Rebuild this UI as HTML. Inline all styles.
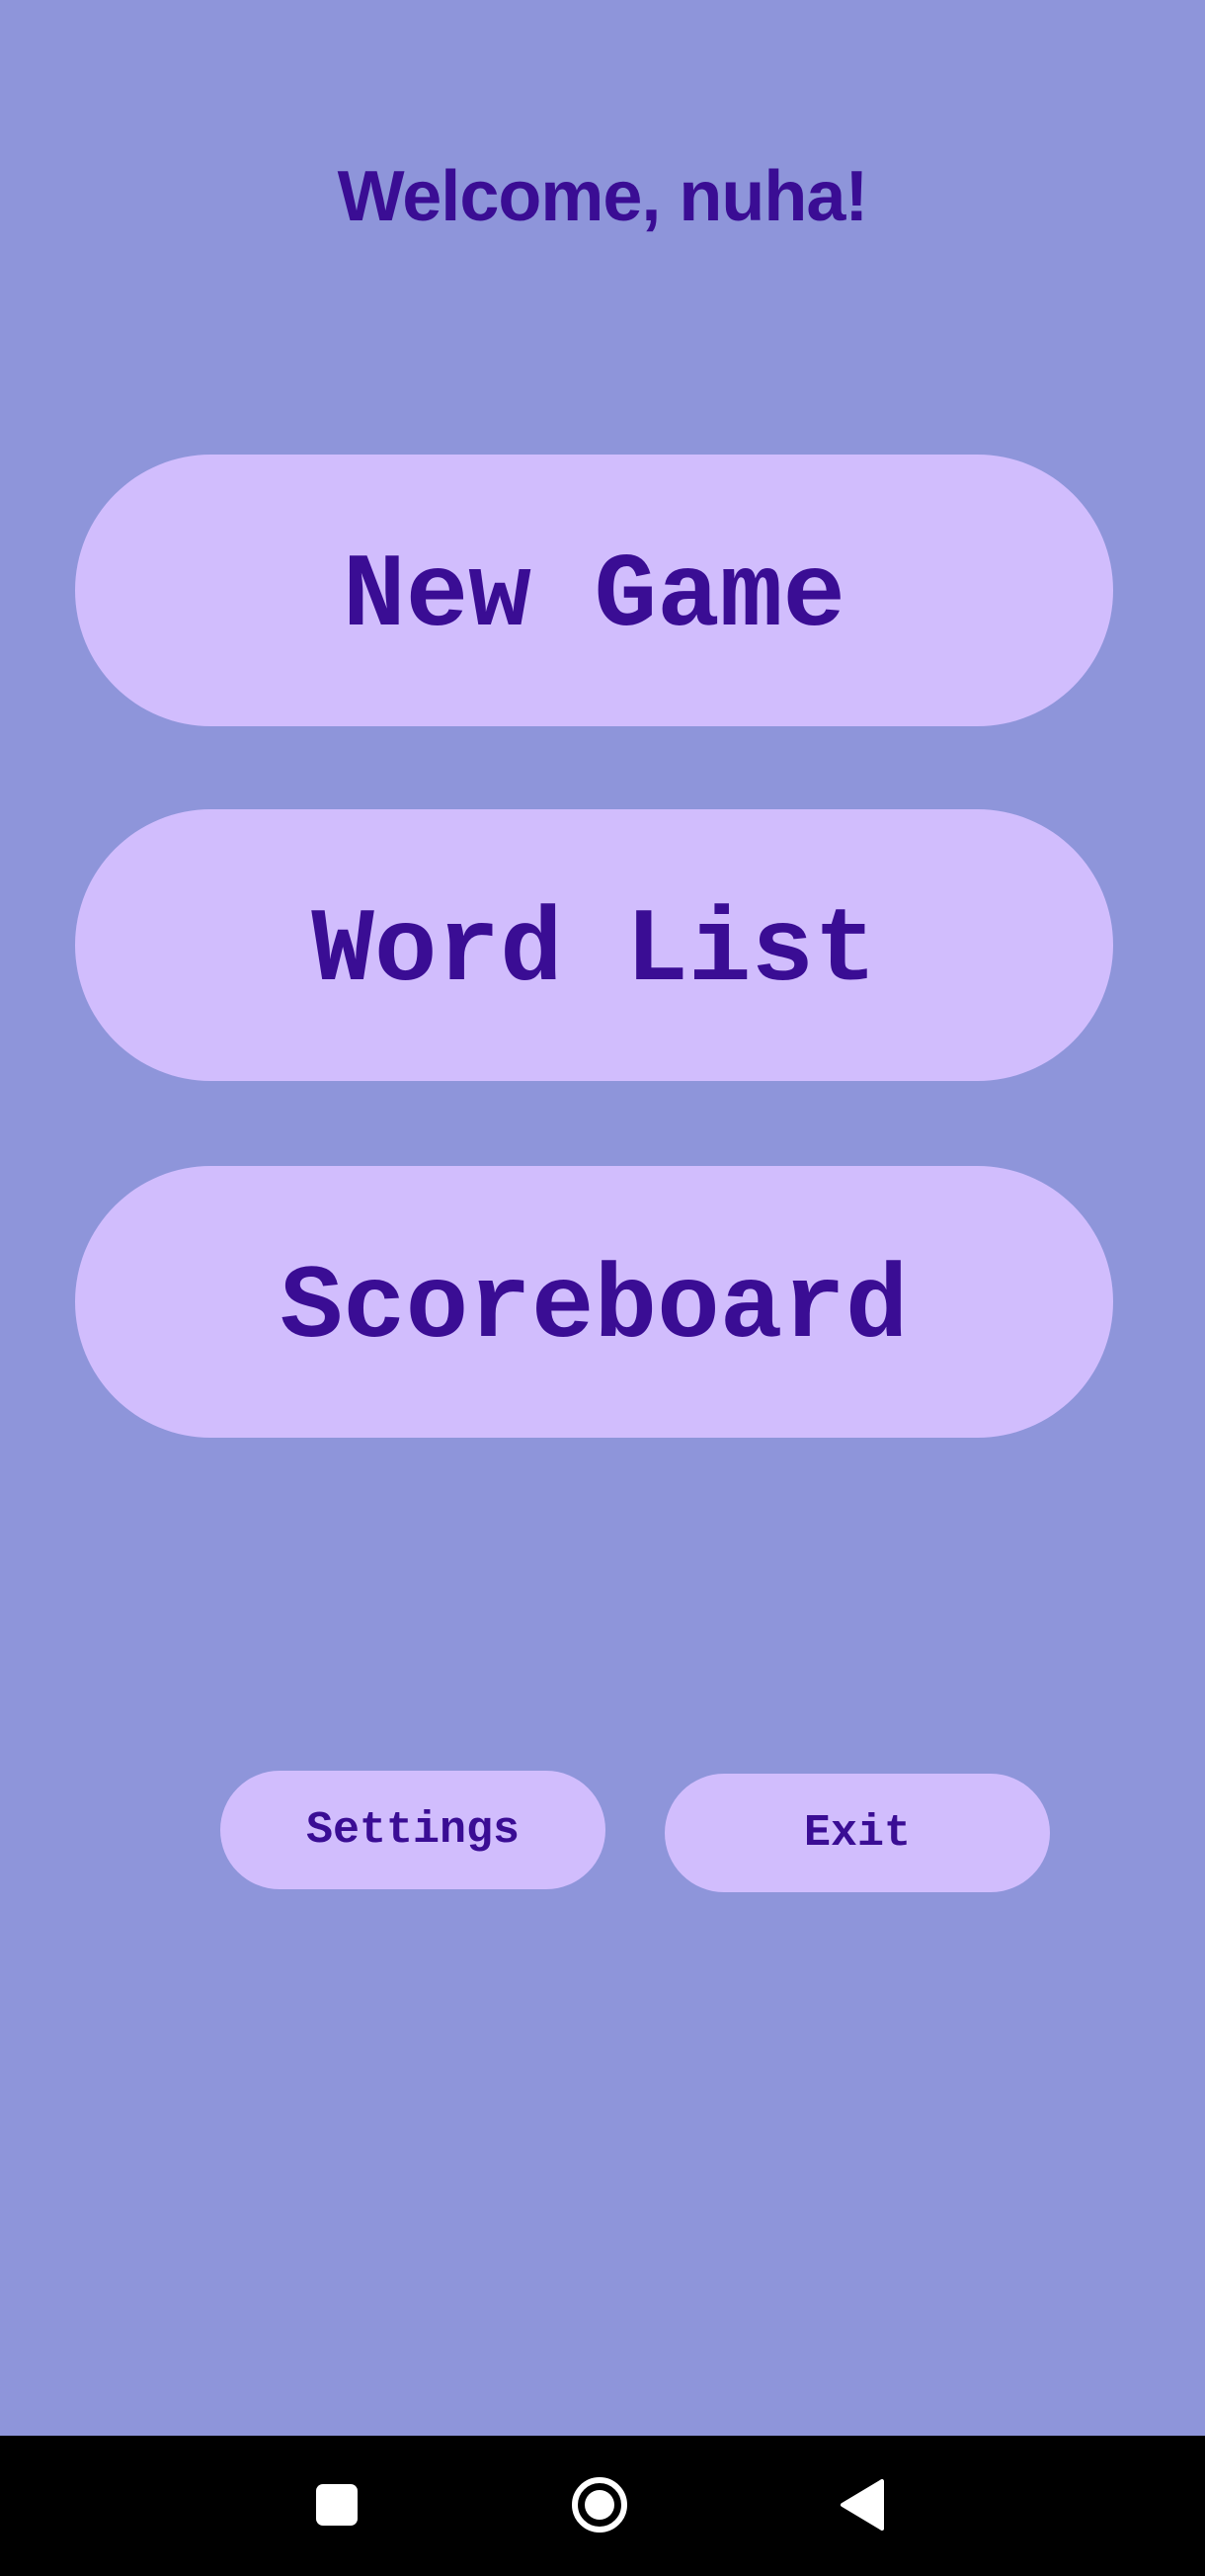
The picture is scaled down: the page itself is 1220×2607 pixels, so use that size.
<!DOCTYPE html>
<html><head><meta charset="utf-8"><style>
html,body{margin:0;padding:0;}
body{width:1220px;height:2607px;background:#8e95da;position:relative;overflow:hidden;font-family:"Liberation Sans",sans-serif;}
.title{position:absolute;left:0;width:1220px;top:158px;text-align:center;font-size:72px;font-weight:bold;color:#3a0d94;letter-spacing:-1px;}
.btn{position:absolute;left:76px;width:1051px;height:275px;border-radius:138px;background:#d1bdfd;color:#3a0d94;font-family:"Liberation Mono",monospace;font-weight:bold;font-size:106px;display:flex;align-items:center;justify-content:center;padding-top:12px;box-sizing:border-box;}
.small{position:absolute;height:120px;width:390px;border-radius:60px;background:#d1bdfd;color:#3a0d94;font-family:"Liberation Mono",monospace;font-weight:bold;font-size:45px;display:flex;align-items:center;justify-content:center;}
.nav{position:absolute;left:0;top:2465px;width:1220px;height:142px;background:#000;}
</style></head><body>
<div class="title">Welcome, nuha!</div>
<div class="btn" style="top:460px">New Game</div>
<div class="btn" style="top:819px">Word List</div>
<div class="btn" style="top:1180px">Scoreboard</div>
<div class="small" style="left:223px;top:1792px">Settings</div>
<div class="small" style="left:673px;top:1795px">Exit</div>
<div class="nav">
<svg width="1220" height="142" style="position:absolute;left:0;top:0">
<rect x="320" y="49" width="42" height="42" rx="7" fill="#fff"/>
<circle cx="607" cy="70" r="25" fill="none" stroke="#fff" stroke-width="6"/>
<circle cx="607" cy="70" r="15" fill="#fff"/>
<path d="M893 46 L893 94 L853 70 Z" fill="#fff" stroke="#fff" stroke-width="4" stroke-linejoin="round"/>
</svg>
</div>
</body></html>
